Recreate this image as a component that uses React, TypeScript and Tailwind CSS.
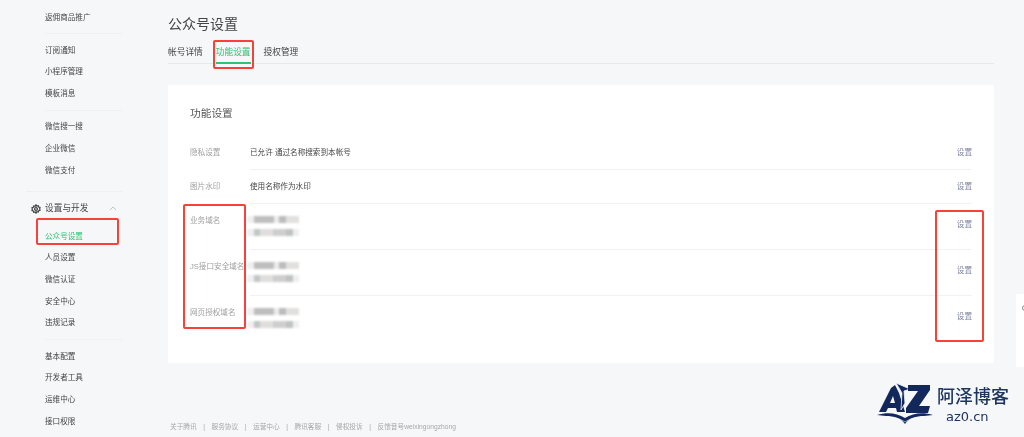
import React from 'react';

const FONT = "font-['Liberation_Sans','Noto_Sans_CJK_SC',sans-serif]";

const Blurred: React.FC = () => (
  <div className="flex flex-col gap-[6px] blur-[1px]">
    <div className="flex h-[7px] w-[52px]">
      <div className="w-[7px] bg-[#efefef]" />
      <div className="w-[20px] bg-[#bebebe]" />
      <div className="w-[5px] bg-[#ececec]" />
      <div className="w-[7px] bg-[#bcbcbc]" />
      <div className="w-[13px] bg-[#e2e0de]" />
    </div>
    <div className="flex h-[7px] w-[58px]">
      <div className="w-[7px] bg-[#efefef]" />
      <div className="w-[6px] bg-[#c2c6c6]" />
      <div className="w-[13px] bg-[#e0dedc]" />
      <div className="w-[13px] bg-[#cecece]" />
      <div className="w-[7px] bg-[#bec2c2]" />
      <div className="w-[6px] bg-[#efefef]" />
    </div>
  </div>
);

const SideGroup: React.FC<{ items: string[]; last?: boolean }> = ({ items, last }) => (
  <div className={last ? 'ml-[45px]' : 'border-b border-[#eef0f2] pb-[5px] mb-[5.5px] ml-[45px] w-[77px]'}>
    {items.map((t) => (
      <div key={t} className="h-[21.7px] leading-[21.7px] text-[7.6px] text-[#444]">
        {t}
      </div>
    ))}
  </div>
);

const SimpleRow: React.FC<{ label: string; value: string; border?: boolean }> = ({ label, value, border }) => (
  <div className="flex items-center h-[34px]">
    <div className="w-[60px] text-[7.6px] text-[#a0a0a0]">{label}</div>
    <div className={`flex-1 flex h-full items-center justify-between ${border ? 'border-b border-[#f0f1f2]' : ''}`}>
      <span className="text-[7.6px] text-[#444]">{value}</span>
      <span className="text-[7.6px] text-[#7c84a0]">设置</span>
    </div>
  </div>
);

const DomainRow: React.FC<{ label: string; border?: boolean }> = ({ label, border }) => (
  <div className="flex h-[46px]">
    <div className="w-[60px] pt-[12px] leading-[10px] text-[7.6px] text-[#a0a0a0]">{label}</div>
    <div className={`flex-1 flex justify-between ${border ? 'border-b border-[#f0f1f2]' : ''}`}>
      <div className="pt-[12px] -ml-[3px]">
        <Blurred />
      </div>
      <span className="pt-[16px] leading-[10px] text-[7.6px] text-[#7c84a0]">设置</span>
    </div>
  </div>
);

const Logo: React.FC = () => (
  <svg width="56" height="42" viewBox="0 0 56 42" className="shrink-0">
    <g fill="#12285a">
      {/* A */}
      <path fillRule="evenodd" d="M2 29 L14 5 L18 2 L22 10 L28 29 L20 29 L19 25 L11 25 L9 29 Z M13 20 L18 20 L16 13 Z" />
      {/* swoosh over the A */}
      <path d="M19 0 L33 6 L27 8 L28 20 L24 27 L25 10 Z" stroke="#f5f7f9" strokeWidth="0.8" />
      {/* Z */}
      <path d="M31 2 L53 2 L53 7 L42 23 L53 23 L51 30 L29 30 L29 25 L41 8 L31 8 Z" />
      {/* book */}
      <path d="M0 32 C10 29 20 30 28 35 C36 30 46 29 56 32 L47 33 C39 33 32 35 28 41 C24 35 17 33 9 33 Z" />
    </g>
    <path d="M8 34.5 C16 34 23 35.5 28 39 C33 35.5 40 34 48 34.5" fill="none" stroke="#f5f7f9" strokeWidth="0.6" />
  </svg>
);

const RedBox: React.FC<{ className: string }> = ({ className }) => (
  <div className={`absolute border-2 border-[#f7413a] rounded-[2px] ${className}`} />
);

export default function App() {
  return (
    <div className={`relative flex h-[437px] w-[1024px] overflow-hidden bg-[#f5f7f9] blur-[0.3px] ${FONT}`}>
      <aside className="w-[168px] shrink-0 pt-[6.5px]">
        <SideGroup items={['返佣商品推广']} />
        <SideGroup items={['订阅通知', '小程序管理', '模板消息']} />
        <SideGroup last items={['微信搜一搜', '企业微信', '微信支付']} />
        <div className="ml-[26px] w-[96px] border-t border-[#eef0f2] mt-[9.5px] pt-[6px]">
          <div className="flex items-center h-[22px] text-[#444]">
            <svg width="10" height="10" viewBox="0 0 24 24" fill="none" stroke="#444" strokeWidth="3" className="ml-[5px] mr-[4px]">
              <circle cx="12" cy="12" r="3.5" />
              <path d="M12 2l2 2.8 3.4-.8 1 3.2 3.2 1.2-.8 3.6.8 3-3.2 1.2-1 3.2-3.4-.8L12 22l-2-2.8-3.4.8-1-3.2-3.2-1.2.8-3 -.8-3.6 3.2-1.2 1-3.2 3.4.8z" />
            </svg>
            <span className="text-[8.7px]">设置与开发</span>
            <svg width="8" height="5" viewBox="0 0 10 6" fill="none" stroke="#b5b5b5" className="ml-auto mr-[5px]">
              <path d="M1 5l4-4 4 4" />
            </svg>
          </div>
        </div>
        <div className="pt-[5.8px]">
          <div className="ml-[45px] h-[21.7px] leading-[21.7px] text-[7.6px] text-[#2fc46f]">公众号设置</div>
          <SideGroup items={['人员设置', '微信认证', '安全中心', '违规记录']} />
          <SideGroup last items={['基本配置', '开发者工具', '运维中心', '接口权限']} />
        </div>
      </aside>

      <main className="w-[826px] shrink-0 flex flex-col">
        <h1 className="mt-[14px] h-[20px] leading-[20px] text-[14px] text-[#444]">公众号设置</h1>
        <div className="mt-[9px] flex gap-[13px] h-[21px] border-b border-[#e6e8ea] text-[8.7px] text-[#444]">
          <span className="leading-[18px]">帐号详情</span>
          <span className="leading-[18px] h-[21px] border-b-2 border-[#2fc46f] text-[#2fc46f]">功能设置</span>
          <span className="leading-[18px]">授权管理</span>
        </div>
        <section className="mt-[21px] h-[278px] bg-white px-[22px] pt-[20px] rounded-[1px]">
          <h2 className="h-[16px] leading-[16px] text-[10.7px] text-[#555]">功能设置</h2>
          <div className="mt-[15px]">
            <SimpleRow border label="隐私设置" value="已允许 通过名称搜索到本帐号" />
            <SimpleRow border label="图片水印" value="使用名称作为水印" />
            <DomainRow border label="业务域名" />
            <DomainRow border label="JS接口安全域名" />
            <DomainRow label="网页授权域名" />
          </div>
        </section>
        <footer className="mt-[59px] ml-[2px] flex items-center gap-[6.5px] text-[6.7px] text-[#a8a8a8]">
          <span>关于腾讯</span><span>|</span>
          <span>服务协议</span><span>|</span>
          <span>运营中心</span><span>|</span>
          <span>腾讯客服</span><span>|</span>
          <span>侵权投诉</span><span>|</span>
          <span>反馈音号weixingongzhong</span>
        </footer>
      </main>

      {/* annotations and overlays */}
      <RedBox className="left-[36px] top-[218px] w-[83px] h-[27px]" />
      <RedBox className="left-[213px] top-[40px] w-[41px] h-[29px]" />
      <RedBox className="left-[183px] top-[204px] w-[63px] h-[125px]" />
      <RedBox className="left-[935px] top-[210px] w-[49px] h-[132px]" />

      <div className="absolute left-[1016px] top-[294px] w-[8px] h-[73px] bg-white">
        <div className="mt-[11px] ml-[6px] w-[6px] h-[6px] rounded-full border border-[#888]" />
      </div>

      <div className="absolute left-[877px] top-[383px] flex text-[#1e3560]">
        <Logo />
        <div className="ml-[4px] pt-[4px] flex flex-col">
          <span className="text-[18px] leading-[21px] font-medium">阿泽博客</span>
          <span className="ml-[9px] mt-[1px] text-[13px] leading-[15px] font-['DejaVu_Sans',sans-serif]">az0.cn</span>
        </div>
      </div>
    </div>
  );
}
